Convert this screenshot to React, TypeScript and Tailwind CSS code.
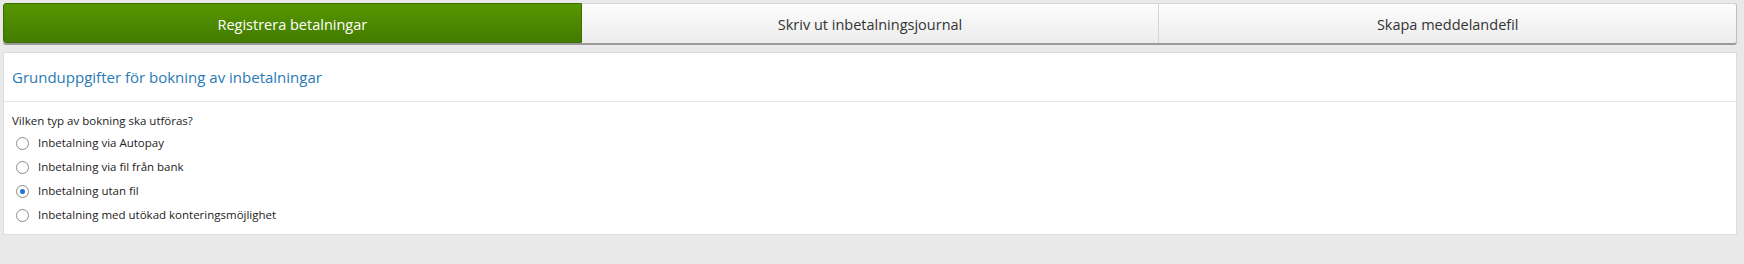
import React, { useState } from 'react';

const tabs = ['Registrera betalningar', 'Skriv ut inbetalningsjournal', 'Skapa meddelandefil'];

const options = [
  'Inbetalning via Autopay',
  'Inbetalning via fil från bank',
  'Inbetalning utan fil',
  'Inbetalning med utökad konteringsmöjlighet',
];

export default function App() {
  const [active, setActive] = useState(0);
  const [choice, setChoice] = useState(2);

  return (
    <div className="w-full h-[264px] bg-[#e9e9e9] pt-[3px] pl-[3px] pr-[7px]" style={{ fontFamily: '"Open Sans", "Noto Sans", sans-serif' }}>
      <div className="flex h-[42px] rounded-[3px] border-b-2 border-[#9a9a9a]">
        {tabs.map((t, i) => (
          <button
            key={t}
            onClick={() => setActive(i)}
            className={`flex-1 flex items-center justify-center pt-[3px] text-[14.5px] ${
              i === active
                ? 'bg-gradient-to-b from-[#579600] to-[#437c00] text-white border border-[#3c6e00] rounded-l-[3px]'
                : 'bg-gradient-to-b from-[#fdfdfd] to-[#ececec] text-[#333] border-t border-r border-[#d4d4d4]'
            } ${i === tabs.length - 1 ? 'rounded-r-[3px] border-r-[#bdbdbd]' : ''}`}
          >
            {t}
          </button>
        ))}
      </div>

      <div className="mt-[7px] bg-white border border-[#dcdcdc] h-[183px]">
        <div className="h-[49px] flex items-center px-[8px] border-b border-[#e6e6e6]">
          <h2 className="text-[15px] text-[#2a7ab8]">Grunduppgifter för bokning av inbetalningar</h2>
        </div>
        <div className="px-[8px] pt-[9px]">
          <p className="text-[11.5px] text-[#222] leading-[20px]">Vilken typ av bokning ska utföras?</p>
          <div className="flex flex-col">
            {options.map((o, i) => (
              <label key={o} className="flex items-center h-[24px] gap-[9px] pl-[4px] text-[11.5px] text-[#222] cursor-pointer" onClick={() => setChoice(i)}>
                <span className="w-[13px] h-[13px] rounded-full border border-[#8a8a8a] bg-white flex items-center justify-center">
                  {choice === i && <span className="w-[5px] h-[5px] rounded-full bg-[#1a78d2]" />}
                </span>
                {o}
              </label>
            ))}
          </div>
        </div>
      </div>
    </div>
  );
}
